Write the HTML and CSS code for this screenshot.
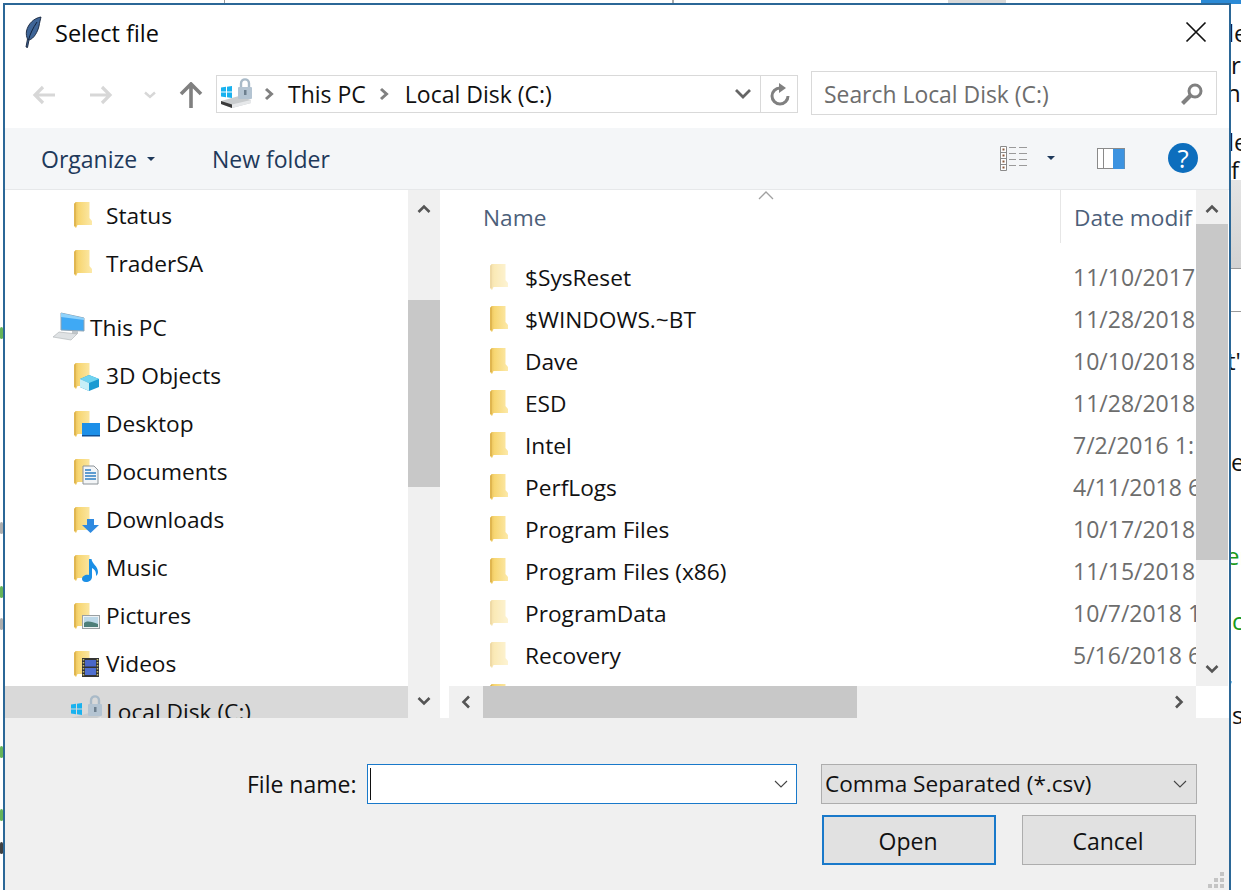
FILE: index.html
```html
<!DOCTYPE html>
<html lang="en">
<head>
<meta charset="utf-8">
<title>Select file</title>
<link rel="stylesheet" href="styles.css">
</head>
<body>
<svg class="defs" width="0" height="0" aria-hidden="true">
  <defs>
    <linearGradient id="fg" x1="0" x2="1" y1="0" y2="0"><stop offset="0" stop-color="#e6bd55"/><stop offset=".25" stop-color="#f7d672"/><stop offset="1" stop-color="#fce9a9"/></linearGradient>
    <symbol id="folder" viewBox="0 0 18 26"><path d="M0 2L2 0H15.500V16L18 19V23H3.500L2 26L0 24Z" fill="url(#fg)"/><path d="M0 2L2 0V24L0 24Z" fill="#e0b650"/></symbol>
    <symbol id="i3d" viewBox="0 0 26 28"><use href="#folder" width="18" height="26"/><path d="M6 16L15 12L25 16V24L15 28L6 24Z" fill="#1b9ad2"/><path d="M6 16L15 12L25 16L15 20Z" fill="#6fd3f0"/><path d="M6 16L15 20V28L6 24Z" fill="#c7eef7"/></symbol>
    <symbol id="idesk" viewBox="0 0 26 28"><use href="#folder" width="18" height="26"/><rect x="8" y="12" width="18" height="13" fill="#1c8fe8"/><rect x="8" y="24" width="18" height="1.500" fill="#0e4f96"/></symbol>
    <symbol id="idoc" viewBox="0 0 26 28"><use href="#folder" width="18" height="26"/><path d="M9 7H20L24 11V25H9Z" fill="#f3f5f7" stroke="#8d9499"/><path d="M11 11h6M11 14h11M11 17h11M11 20h11" stroke="#2f7fc4" stroke-width="1.300"/></symbol>
    <symbol id="idown" viewBox="0 0 26 28"><use href="#folder" width="18" height="26"/><path d="M13 12H20V18H25L16.500 26L8 18H13Z" fill="#2f8ae0"/></symbol>
    <symbol id="imusic" viewBox="0 0 26 28"><use href="#folder" width="18" height="26"/><path d="M15 4H17.500C18 9 24 11 24 17C24 19 23 20 22 21C22.500 16 20 14 18 13V22C18 25 15 27 12 27C9 27 8 25 8 24C8 21 12 19 15 20Z" fill="#1b8fe6"/></symbol>
    <symbol id="ipic" viewBox="0 0 26 28"><use href="#folder" width="18" height="26"/><rect x="8.500" y="12.500" width="17" height="13" fill="#eef2f4" stroke="#9aa0a3"/><rect x="10" y="14" width="14" height="10" fill="#bcd8e8"/><path d="M10 20C14 17 18 19 24 21V24H10Z" fill="#4e7f7a"/></symbol>
    <symbol id="ivid" viewBox="0 0 26 28"><use href="#folder" width="18" height="26"/><rect x="8" y="7" width="17" height="19" fill="#333"/><rect x="11" y="9" width="11" height="6.500" fill="#4a67c8"/><rect x="11" y="17" width="11" height="7" fill="#4f6fd0"/><path d="M9.500 8v17M23.500 8v17" stroke="#c8c070" stroke-width="1.500" stroke-dasharray="1.500 1.500"/></symbol>
    <symbol id="disk" viewBox="0 0 34 32">
      <path d="M3 9.500L8 8.800V13.500H3ZM9 8.700L14 8V13.500H9ZM3 14.500H8V19.200L3 18.500ZM9 14.500H14V20L9 19.300Z" fill="#19b2ef"/>
      <path d="M3 23L21 18L33 22V25L14 30L3 26Z" fill="#c9ccce"/><path d="M3 23L14 26.500V30L3 26Z" fill="#3a3a3a"/><path d="M14 26.500L33 22V25L14 30Z" fill="#e6e8ea"/>
      <path d="M23 10V5.500C23 0 31 0 31 5.500V10" fill="none" stroke="#a9bac8" stroke-width="2.400"/><rect x="20" y="9" width="14" height="12" rx="1" fill="#b4c4d2"/><rect x="26" y="12" width="2.500" height="5" fill="#6d7f8e"/>
    </symbol>
  </defs>
</svg>

<div class="desk">
  <i class="strip strip-a"></i><i class="strip strip-b"></i><i class="strip strip-c"></i><i class="strip strip-d"></i>
  <i class="blip b1"></i><i class="blip b2"></i><i class="blip b3"></i><i class="blip b4"></i><i class="blip b5"></i><i class="blip b6"></i><i class="blip b7"></i>
  <i class="shade"></i><i class="rule r1"></i><i class="rule r2"></i>
  <span class="peek p1">le</span><span class="peek p2">r</span><span class="peek p3">n</span><span class="peek p4">le</span><span class="peek p5">f</span><span class="peek p6">t'</span><span class="peek p7">e</span><span class="peek p8 green">er</span><span class="peek p9 green">c</span><span class="peek p10">,</span><span class="peek p11">s</span>

  <section class="dialog">
    <header class="title">
      <svg class="feather" width="18" height="32" viewBox="0 0 18 32"><path d="M17 1C10 2 4 8 2.500 15C2 18 2.500 21 3.500 23L2 31L3.500 31.500L5 24C10 23 14 15 15 10C15.500 7 16.500 3 17 1Z" fill="#3f6597" stroke="#14233a" stroke-width=".9"/><path d="M13 6C9 12 6 18 4.500 24" stroke="#12233d" fill="none"/></svg>
      <h1 class="title-text">Select file</h1>
      <svg class="close" width="22" height="22" viewBox="0 0 22 22"><path d="M1.500 1.500L20.500 20.500M20.500 1.500L1.500 20.500" stroke="#111" stroke-width="1.700"/></svg>
    </header>

    <div class="navbar">
      <div class="nav-btns">
        <svg class="nb nb-back" width="24" height="20" viewBox="0 0 24 20"><path d="M11 2L3 10L11 18M3 10H23" fill="none" stroke="#d7d7d7" stroke-width="3.200"/></svg>
        <svg class="nb nb-fwd" width="24" height="20" viewBox="0 0 24 20"><path d="M13 2L21 10L13 18M21 10H1" fill="none" stroke="#d7d7d7" stroke-width="3.200"/></svg>
        <svg class="nb nb-down" width="12" height="8" viewBox="0 0 12 8"><path d="M1 1.500L6 6L11 1.500" fill="none" stroke="#d7d7d7" stroke-width="2.400"/></svg>
        <svg class="nb nb-up" width="24" height="26" viewBox="0 0 24 26"><path d="M2 12L12 2L22 12M12 2V26" fill="none" stroke="#808080" stroke-width="3.600"/></svg>
      </div>
      <div class="addr">
        <svg class="addr-icon" width="34" height="32"><use href="#disk"/></svg>
        <svg class="crumb c1" width="10" height="14" viewBox="0 0 10 14"><path d="M2 2L7.500 7L2 12" fill="none" stroke="#808080" stroke-width="3"/></svg>
        <span class="addr-seg s1">This PC</span>
        <svg class="crumb c2" width="10" height="14" viewBox="0 0 10 14"><path d="M2 2L7.500 7L2 12" fill="none" stroke="#808080" stroke-width="3"/></svg>
        <span class="addr-seg s2">Local Disk (C:)</span>
        <svg class="addr-drop" width="18" height="12" viewBox="0 0 18 12"><path d="M2 2L9 9L16 2" fill="none" stroke="#666" stroke-width="2.800"/></svg>
        <div class="refresh"><svg width="22" height="24" viewBox="0 0 22 24"><path d="M11 5A8 8 0 1 0 19 13" fill="none" stroke="#808080" stroke-width="3"/><path d="M10 0L17 5L10 10Z" fill="#808080"/></svg></div>
      </div>
      <div class="search">
        <span class="search-text">Search Local Disk (C:)</span>
        <svg width="24" height="24" viewBox="0 0 24 24"><circle cx="15" cy="9" r="6" fill="none" stroke="#808080" stroke-width="3"/><path d="M10.500 13.500L2.500 21.500" stroke="#808080" stroke-width="4"/></svg>
      </div>
    </div>

    <div class="toolbar">
      <button class="tool organize">Organize<i class="caret"></i></button>
      <button class="tool newf">New folder</button>
      <svg class="views" width="28" height="25" viewBox="0 0 28 25"><path d="M.500.500h6v24h-6zM.500 6.500h6M.500 12.500h6M.500 18.500h6" fill="#fff" stroke="#8a8a8a"/><path d="M2.500 2.500h2v2h-2zM2.500 8.500h2v2h-2zM2.500 14.500h2v2h-2zM2.500 20.500h2v2h-2z" fill="#8a5a3c"/><path d="M9 1.500h7M19 1.500h8M9 7.500h7M19 7.500h8M9 13.500h7M19 13.500h8M9 19.500h7M19 19.500h8" stroke="#9a9a9a"/></svg>
      <i class="caret caret-views"></i>
      <svg class="preview" width="28" height="21" viewBox="0 0 28 21"><rect x=".500" y=".500" width="27" height="20" fill="#fff" stroke="#8a8a8a"/><path d="M6.500 1v19" stroke="#8a8a8a"/><rect x="16" y="1" width="11.500" height="20" fill="#3d93e0"/></svg>
      <span class="help">?</span>
    </div>

    <div class="main">
      <nav class="tree">
        <div class="tree-row"><svg class="tfolder" width="18" height="26"><use href="#folder"/></svg><span>Status</span></div>
        <div class="tree-row"><svg class="tfolder" width="18" height="26"><use href="#folder"/></svg><span>TraderSA</span></div>
        <div class="tree-row pc">
          <svg class="pc-icon" width="32" height="30" viewBox="0 0 32 30"><path d="M8 1L31 6V19L8 18Z" fill="#3fa9f5" stroke="#8fa3b3"/><path d="M8 1L31 6V8L8 5Z" fill="#8fd2fb"/><path d="M19 19L25 19V22H19Z" fill="#c0c6ca"/><path d="M6 20L24 22L18 28L0 25Z" fill="#dfe2e4" stroke="#b5b9bc" stroke-width=".7"/></svg>
          <span>This PC</span>
        </div>
        <div class="tree-row"><svg class="ticon" width="26" height="28"><use href="#i3d"/></svg><span>3D Objects</span></div>
        <div class="tree-row"><svg class="ticon" width="26" height="28"><use href="#idesk"/></svg><span>Desktop</span></div>
        <div class="tree-row"><svg class="ticon" width="26" height="28"><use href="#idoc"/></svg><span>Documents</span></div>
        <div class="tree-row"><svg class="ticon" width="26" height="28"><use href="#idown"/></svg><span>Downloads</span></div>
        <div class="tree-row"><svg class="ticon" width="26" height="28"><use href="#imusic"/></svg><span>Music</span></div>
        <div class="tree-row"><svg class="ticon" width="26" height="28"><use href="#ipic"/></svg><span>Pictures</span></div>
        <div class="tree-row"><svg class="ticon" width="26" height="28"><use href="#ivid"/></svg><span>Videos</span></div>
        <div class="tree-row sel"><svg class="disk-icon" width="34" height="32"><use href="#disk"/></svg><span>Local Disk (C:)</span></div>
      </nav>
      <div class="vbar tree-bar">
        <svg class="arr" width="14" height="10" viewBox="0 0 14 10"><path d="M1.500 8L7 2.500L12.500 8" fill="none" stroke="#555" stroke-width="2.600"/></svg>
        <div class="thumb-t"></div>
        <svg class="arr arr-end" width="14" height="10" viewBox="0 0 14 10"><path d="M1.500 2L7 7.500L12.500 2" fill="none" stroke="#555" stroke-width="2.600"/></svg>
      </div>

      <div class="files">
        <div class="files-top">
          <div class="list">
            <div class="head">
              <span class="hname">Name</span>
              <svg class="sort" width="16" height="9" viewBox="0 0 16 9"><path d="M1 8L8 1L15 8" fill="none" stroke="#a0a0a0" stroke-width="1.300"/></svg>
              <span class="hdate">Date modified</span>
            </div>
            <div class="row"><svg class="ficon faded" width="18" height="26"><use href="#folder"/></svg><span class="fname">$SysReset</span><span class="fdate">11/10/2017 3:12 PM</span></div>
            <div class="row"><svg class="ficon" width="18" height="26"><use href="#folder"/></svg><span class="fname">$WINDOWS.~BT</span><span class="fdate">11/28/2018 9:40 AM</span></div>
            <div class="row"><svg class="ficon" width="18" height="26"><use href="#folder"/></svg><span class="fname">Dave</span><span class="fdate">10/10/2018 2:05 PM</span></div>
            <div class="row"><svg class="ficon" width="18" height="26"><use href="#folder"/></svg><span class="fname">ESD</span><span class="fdate">11/28/2018 9:41 AM</span></div>
            <div class="row"><svg class="ficon" width="18" height="26"><use href="#folder"/></svg><span class="fname">Intel</span><span class="fdate">7/2/2016 1:15 PM</span></div>
            <div class="row"><svg class="ficon" width="18" height="26"><use href="#folder"/></svg><span class="fname">PerfLogs</span><span class="fdate">4/11/2018 6:38 PM</span></div>
            <div class="row"><svg class="ficon" width="18" height="26"><use href="#folder"/></svg><span class="fname">Program Files</span><span class="fdate">10/17/2018 8:20 AM</span></div>
            <div class="row"><svg class="ficon" width="18" height="26"><use href="#folder"/></svg><span class="fname">Program Files (x86)</span><span class="fdate">11/15/2018 4:52 PM</span></div>
            <div class="row"><svg class="ficon faded" width="18" height="26"><use href="#folder"/></svg><span class="fname">ProgramData</span><span class="fdate">10/7/2018 11:02 AM</span></div>
            <div class="row"><svg class="ficon faded" width="18" height="26"><use href="#folder"/></svg><span class="fname">Recovery</span><span class="fdate">5/16/2018 6:44 PM</span></div>
            <div class="row"><svg class="ficon" width="18" height="26"><use href="#folder"/></svg></div>
          </div>
          <div class="vbar list-bar">
            <svg class="arr" width="14" height="10" viewBox="0 0 14 10"><path d="M1.500 8L7 2.500L12.500 8" fill="none" stroke="#555" stroke-width="2.600"/></svg>
            <div class="thumb-l"></div>
            <svg class="arr arr-end" width="14" height="10" viewBox="0 0 14 10"><path d="M1.500 2L7 7.500L12.500 2" fill="none" stroke="#555" stroke-width="2.600"/></svg>
          </div>
        </div>
        <div class="hbar">
          <div class="harr"><svg width="10" height="14" viewBox="0 0 10 14"><path d="M8 1.500L2.500 7L8 12.500" fill="none" stroke="#555" stroke-width="2.600"/></svg></div>
          <div class="thumb-h"></div>
          <div class="harr harr-end"><svg width="10" height="14" viewBox="0 0 10 14"><path d="M2 1.500L7.500 7L2 12.500" fill="none" stroke="#555" stroke-width="2.600"/></svg></div>
        </div>
      </div>
    </div>

    <footer class="bottom">
      <div class="name-row">
        <label class="fn-label">File name:</label>
        <div class="combo"><i class="cursor"></i><svg width="14" height="8" viewBox="0 0 14 8"><path d="M1 1L7 7L13 1" fill="none" stroke="#444" stroke-width="1.100"/></svg></div>
        <div class="filter"><span>Comma Separated (*.csv)</span><svg width="14" height="8" viewBox="0 0 14 8"><path d="M1 1L7 7L13 1" fill="none" stroke="#444" stroke-width="1.100"/></svg></div>
      </div>
      <div class="btn-row">
        <button class="btn primary">Open</button>
        <button class="btn">Cancel</button>
      </div>
      <svg class="grip" width="16" height="16" viewBox="0 0 16 16"><path d="M12 0h4v4h-4zM6 6h4v4H6zM12 6h4v4h-4zM0 12h4v4H0zM6 12h4v4H6zM12 12h4v4h-4z" fill="#c4c4c4"/></svg>
    </footer>
  </section>
</div>
</body>
</html>
```

FILE: styles.css
```css
* { box-sizing: border-box; }
html, body { margin: 0; height: 100%; }
body { background: #fff; overflow: hidden; font-family: "Open Sans", "Noto Sans", sans-serif; font-size: 23px; color: #111; }
.defs { position: absolute; }
.desk { position: relative; width: 1241px; height: 890px; overflow: hidden; }

/* Windows peeking out behind the dialog */
.strip { position: absolute; top: 0; height: 4px; }
.strip-a { left: 224px; width: 1px; background: #999; }
.strip-b { left: 672px; width: 2px; background: #aaa; }
.strip-c { left: 948px; width: 58px; background: #d8d8d8; }
.strip-d { left: 1201px; width: 40px; background: #2b8ad6; }
.blip { position: absolute; left: 0; width: 3px; height: 12px; border-radius: 2px; background: #3ea02e; opacity: .8; }
.b1 { top: 327px; }
.b2 { top: 522px; background: #999; }
.b3 { top: 586px; }
.b4 { top: 618px; background: #999; }
.b5 { top: 746px; }
.b6 { top: 809px; }
.b7 { top: 842px; background: #111; }
.shade { position: absolute; left: 1231px; top: 180px; width: 10px; height: 88px; background: linear-gradient(#e4e4e4, #d2d2d2); }
.rule { position: absolute; left: 1231px; width: 10px; height: 1px; background: #9a9a9a; }
.r1 { top: 268px; }
.r2 { top: 311px; }
.peek { position: absolute; left: 1228px; line-height: 30px; font-size: 24px; color: #111; }
.green { color: #1a9a1a; }
.p1 { top: 18px; }
.p2 { top: 50px; left: 1231px; }
.p3 { top: 78px; left: 1226px; }
.p4 { top: 127px; }
.p5 { top: 155px; left: 1231px; }
.p6 { top: 346px; left: 1227px; }
.p7 { top: 447px; left: 1231px; }
.p8 { top: 541px; left: 1226px; }
.p9 { top: 606px; left: 1232px; }
.p10 { top: 660px; left: 1227px; }
.p11 { top: 700px; left: 1232px; }

/* Dialog window */
.dialog { position: absolute; left: 3px; top: 3px; width: 1228px; height: 887px; background: #fff; border: 2px solid #2b6797; border-bottom: 0; display: flex; flex-direction: column; }

.title { height: 53px; display: flex; align-items: center; flex: none; padding: 0 22px 0 19px; }
.feather { flex: none; }
.title-text { font-weight: 400; font-size: 23.5px; margin: 2px 0 0 13px; flex: 1; color: #0a0a0a; }

.navbar { height: 70px; flex: none; display: flex; align-items: center; padding: 0 12px 0 27px; }
.nav-btns { width: 184px; height: 30px; display: flex; align-items: center; flex: none; padding-top: 3px; }
.nb { flex: none; }
.nb-fwd { margin-left: 33px; }
.nb-down { margin-left: 31px; }
.nb-up { margin-left: 23px; }
.addr { width: 582px; height: 38px; margin-top: 1px; border: 1px solid #d9d9d9; display: flex; align-items: center; flex: none; padding-left: 1px; }
.addr-icon { flex: none; }
.crumb { flex: none; margin-left: 12px; }
.addr-seg { margin-left: 14px; white-space: nowrap; padding-top: 1px; }
.crumb.c2 { margin-left: 13px; }
.addr-seg.s2 { flex: 1; margin-left: 16px; }
.addr-drop { flex: none; margin-right: 8px; }
.refresh { flex: none; width: 37px; border-left: 1px solid #d9d9d9; height: 36px; padding: 6px 0 0 8px; }
.search { width: 406px; height: 44px; margin-left: 13px; border: 1px solid #d9d9d9; display: flex; align-items: center; justify-content: space-between; padding: 2px 12px 0; flex: none; color: #6d6d6d; font-size: 22.9px; }

.toolbar { height: 62px; flex: none; background: #f4f6f8; border-bottom: 1px solid #e6e8ea; display: flex; align-items: center; color: #1e395b; padding-left: 36px; padding-bottom: 1px; }
.tool { background: none; border: 0; padding: 2px 0 0; font: inherit; color: inherit; display: flex; align-items: center; }
.organize { width: 171px; }
.caret { display: inline-block; border: 4px solid transparent; border-top: 4px solid #1e395b; border-bottom: 0; margin-left: 10px; }
.views { margin-left: auto; flex: none; }
.caret-views { margin-left: 19px; }
.preview { flex: none; margin-left: 42px; }
.help { flex: none; width: 30px; height: 30px; border-radius: 50%; margin: 0 31px 0 43px; background: #0d6ebd; color: #fff; font-size: 26px; line-height: 30px; text-align: center; }

.main { height: 528px; flex: none; display: flex; font-size: 22.7px; }
.tree { width: 403px; flex: none; overflow: hidden; padding-top: 1px; }
.tree-row { height: 48px; display: flex; align-items: center; padding-left: 69px; white-space: nowrap; }
.tree-row.pc { margin-top: 16px; padding-left: 48px; }
.tree-row.sel { background: #d9d9d9; padding: 1px 0 0 63px; margin-top: -1px; height: 49px; }
.tfolder { flex: none; margin-right: 14px; }
.ticon { flex: none; margin-top: 3px; margin-right: 6px; }
.pc-icon { flex: none; margin-right: 5px; }
.disk-icon { flex: none; margin-right: 4px; }

.vbar { width: 32px; flex: none; background: #f0f0f0; display: flex; flex-direction: column; align-items: center; }
.arr { flex: none; margin: 14px 0 10px; }
.arr-end { margin: auto 0 12px; }
.thumb-t { width: 32px; height: 187px; margin-top: 76px; background: #c8c8c8; }
.list-bar { height: 496px; }
.thumb-l { width: 32px; height: 336px; background: #c8c8c8; }

.files { flex: 1; min-width: 0; padding-left: 5px; display: flex; flex-direction: column; }
.files-top { display: flex; height: 496px; flex: none; }
.list { width: 751px; flex: none; overflow: hidden; }
.head { height: 66px; display: flex; align-items: flex-start; color: #4c607a; position: relative; }
.hname { margin: 12px 0 0 38px; }
.sort { position: absolute; left: 313px; top: 1px; }
.hdate { position: absolute; left: 615px; top: 0; width: 133px; overflow: hidden; height: 53px; border-left: 1px solid #e6e6e6; padding: 12px 0 0 13px; white-space: nowrap; }
.row { height: 42px; display: flex; align-items: center; white-space: nowrap; position: relative; }
.ficon { flex: none; margin-left: 45px; }
.ficon.faded { opacity: .5; }
.fname { margin-left: 17px; width: 548px; flex: none; }
.fdate { color: #6d6d6d; font-size: 23px; }
.hbar { height: 32px; flex: none; margin-left: 4px; margin-right: 33px; background: #f0f0f0; display: flex; }
.harr { width: 34px; display: flex; align-items: center; justify-content: center; }
.harr-end { margin-left: auto; }
.thumb-h { width: 374px; background: #c8c8c8; }

.bottom { flex: 1; background: #f0f0f0; padding-top: 46px; display: flex; flex-direction: column; position: relative; }
.name-row { display: flex; height: 39px; align-items: center; padding-left: 242px; }
.fn-label { width: 109px; white-space: nowrap; }
.combo { width: 430px; height: 40px; margin-left: 11px; background: #fff; border: 1px solid #1979ca; display: flex; align-items: center; justify-content: space-between; padding: 0 8px 0 2px; }
.cursor { width: 1px; height: 32px; background: #111; }
.filter { width: 376px; height: 40px; margin-left: 24px; background: #e1e1e1; border: 1px solid #adadad; display: flex; align-items: center; justify-content: space-between; padding: 0 9px 0 3px; white-space: nowrap; font-size: 22.6px; }
.btn-row { display: flex; justify-content: flex-end; gap: 26px; margin-top: 12px; padding-right: 33px; }
.btn { width: 174px; height: 50px; background: #e1e1e1; border: 1px solid #adadad; font: inherit; color: #111; padding: 2px 2px 0 0; }
.btn.primary { border: 2px solid #1979ca; }
.grip { position: absolute; right: 5px; bottom: 2px; }
```
